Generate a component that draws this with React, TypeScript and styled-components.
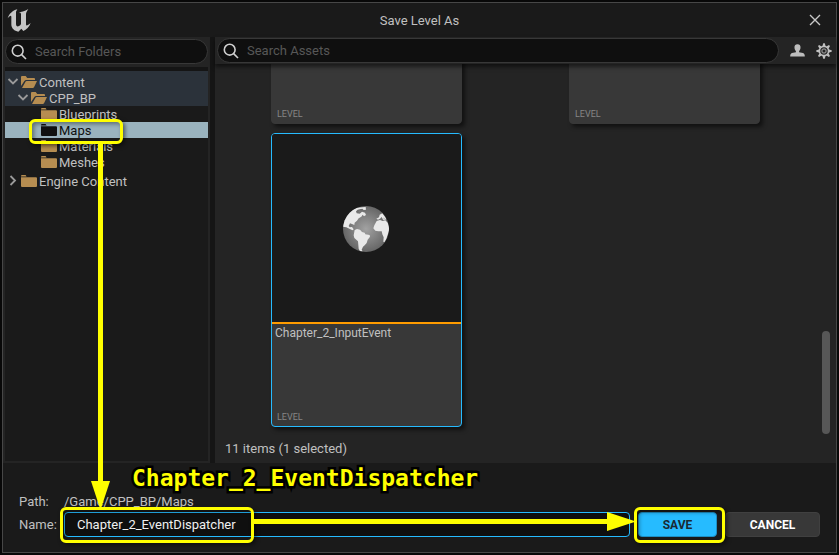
import React from "react";
import styled, { createGlobalStyle, css } from "styled-components";

const GlobalStyle = createGlobalStyle`
  *, *::before, *::after { box-sizing: border-box; }
  html, body, #root { height: 100%; }
  body {
    margin: 0;
    background: #080808;
    font-family: Roboto, "Liberation Sans", sans-serif;
    font-size: 13px;
    line-height: 16px;
    color: #c0c0c0;
  }
  button, input { font: inherit; color: inherit; }
`;

const yellow = "#ffff00";

const Desktop = styled.div`
  height: 100%;
  padding: 2px;
`;

const Dialog = styled.main`
  position: relative;
  display: flex;
  flex-direction: column;
  height: 100%;
  border: 1px solid #474747;
  background: #1a1a1a;
`;

const TitleBar = styled.header`
  display: grid;
  grid-template-columns: 1fr auto 1fr;
  align-items: center;
  height: 34px;
  flex: none;
  padding: 0 4px;
`;

const Title = styled.h1`
  margin: 0;
  padding-top: 2px;
  font-size: 13px;
  font-weight: 400;
`;

const IconButton = styled.button`
  display: flex;
  justify-self: end;
  padding: 0;
  border: 0;
  background: none;
`;

const CloseButton = styled(IconButton)`
  padding: 0 11px;
`;

const Panels = styled.div`
  display: flex;
  flex: 1;
  min-height: 0;
  gap: 5px;
  background: #151515;
`;

const FolderPanel = styled.aside`
  display: flex;
  flex-direction: column;
  flex: none;
  width: 207px;
  background: #242424;
  padding: 0 2px 2px;
`;

const FolderSearchBar = styled.div`
  padding: 2px 0 3px;
`;

const SearchBox = styled.label`
  display: flex;
  align-items: center;
  gap: 8px;
  flex: 1;
  height: 25px;
  padding: 0 5px;
  border: 1px solid #383838;
  border-radius: 13px;
  background: #0f0f0f;
`;

const SearchInput = styled.input`
  flex: 1;
  min-width: 0;
  padding: 0;
  border: 0;
  outline: 0;
  background: none;
  &::placeholder { color: #575757; opacity: 1; }
`;

const Tree = styled.ul`
  flex: 1;
  margin: 0;
  padding: 0;
  list-style: none;
  border-top: 4px solid #151515;
  background: #1a1a1a;
`;

const TreeRow = styled.li<{ $depth: number; $state?: "ancestor" | "selected" }>`
  position: relative;
  display: flex;
  align-items: center;
  gap: 2px;
  height: ${(p) => (p.$depth === 0 ? 19 : 16)}px;
  padding-top: ${(p) => (p.$depth === 0 ? 3 : 0)}px;
  padding-left: ${(p) => 2 + p.$depth * 10}px;
  white-space: nowrap;
  ${(p) => p.$state === "ancestor" && css`background: #2b323a;`}
  ${(p) => p.$state === "selected" && css`background: #9ab3be; color: #101010;`}
`;

const TreeLabel = styled.span`
  padding-top: 2px;
`;

const Twisty = styled.span`
  display: flex;
  width: 12px;
`;

const AssetPanel = styled.section`
  display: flex;
  flex-direction: column;
  flex: 1;
  min-width: 0;
  background: #242424;
`;

const AssetToolbar = styled.div`
  position: relative;
  display: flex;
  align-items: center;
  gap: 11px;
  flex: none;
  height: 27px;
  padding: 0 4px 0 2px;
  background: #242424;
  box-shadow: 0 3px 4px #0008;
`;

const AssetView = styled.div`
  display: flex;
  flex: 1;
  min-height: 0;
`;

const AssetGrid = styled.div`
  display: grid;
  flex: 1;
  grid-template-columns: repeat(auto-fill, 191px);
  align-content: end;
  gap: 9px 107px;
  padding: 0 0 10px 56px;
  overflow: hidden;
`;

const Card = styled.article<{ $selected?: boolean }>`
  display: flex;
  flex-direction: column;
  height: 294px;
  overflow: hidden;
  border: 1px solid ${(p) => (p.$selected ? "#26bbff" : "#383838")};
  border-radius: 4px;
  background: #383838;
  box-shadow: 3px 3px 4px #0008;
`;

const Thumbnail = styled.div`
  display: grid;
  place-items: center;
  height: 190px;
  flex: none;
  padding: 2px 1px 0 0;
  border-bottom: 2px solid #ff9c00;
  background: #1a1a1a;
`;

const AssetName = styled.div`
  flex: 1;
  padding: 1px 3px 0;
  font-size: 12px;
`;

const AssetType = styled.div`
  padding: 0 5px 1px;
  font-size: 9px;
  line-height: 15px;
  color: #868686;
`;

const ScrollRail = styled.div`
  display: flex;
  align-items: flex-end;
  width: 14px;
  padding-bottom: 3px;
`;

const ScrollThumb = styled.div`
  width: 8px;
  height: 103px;
  border-radius: 4px;
  background: #575757;
`;

const StatusLine = styled.div`
  padding: 4px 10px 6px;
`;

const Footer = styled.form`
  display: grid;
  grid-template-columns: 45px minmax(0, 1fr);
  align-items: center;
  flex: none;
  padding: 28px 16px 15px;
`;

const PathText = styled.output`
  line-height: 21px;
`;

const NameRow = styled.div`
  display: flex;
  align-items: center;
  gap: 8px;
`;

const NameField = styled.div`
  position: relative;
  flex: 1;
  min-width: 0;
`;

const NameInput = styled.input`
  display: block;
  width: 100%;
  height: 25px;
  padding: 0 12px;
  border: 1px solid #26bbff;
  border-radius: 4px;
  outline: 0;
  background: #0f0f0f;
  color: #f0f0f0;
`;

const Buttons = styled.div`
  display: flex;
  gap: 8px;
`;

const ButtonSlot = styled.div<{ $width: number }>`
  position: relative;
  width: ${(p) => p.$width}px;
`;

const ActionButton = styled.button<{ $primary?: boolean }>`
  width: 100%;
  height: 25px;
  padding: 0;
  border: 1px solid ${(p) => (p.$primary ? "#1e8fc4" : "#404040")};
  border-radius: 4px;
  background: ${(p) => (p.$primary ? "#26bbff" : "#383838")};
  color: ${(p) => (p.$primary ? "#1a2a33" : "#ffffff")};
  font-size: 12px;
  font-weight: 700;
`;

const Highlight = styled.span<{ $inset: string; $width?: number }>`
  position: absolute;
  z-index: 2;
  inset: ${(p) => p.$inset};
  ${(p) => p.$width && css`width: ${p.$width}px;`}
  border: 3px solid ${yellow};
  border-radius: 6px;
  box-shadow: 2px 2px 4px #0008, inset 2px 2px 4px #0006;
  pointer-events: none;
`;

const DownArrow = styled.span`
  position: absolute;
  z-index: 3;
  left: 88px;
  top: 139px;
  bottom: 42px;
  width: 19px;
  display: flex;
  flex-direction: column;
  align-items: center;
  pointer-events: none;
  &::before { content: ""; flex: 1; width: 5px; background: ${yellow}; }
`;

const RightArrow = styled.span`
  position: absolute;
  z-index: 3;
  left: 189px;
  right: -6px;
  top: 0;
  height: 19px;
  display: flex;
  align-items: center;
  pointer-events: none;
  &::before { content: ""; flex: 1; height: 5px; background: ${yellow}; }
`;

const Callout = styled.span`
  position: absolute;
  z-index: 3;
  left: 129px;
  bottom: 58px;
  font-family: "DejaVu Sans Mono", monospace;
  font-size: 23px;
  line-height: 32px;
  font-weight: 700;
  color: ${yellow};
  -webkit-text-stroke: 5px #000;
  paint-order: stroke fill;
  pointer-events: none;
`;

const Logo = () => (
  <svg width="24" height="24" viewBox="0 0 72 72" fill="#c6c6c6" aria-label="Unreal">
    <path d="M2 31C6 18 16 8 31 4L27 11V48C27 54 31 57 36 54C39 53 41 51 42 48V19C42 15 40 14 35 16C40 10 54 11 64 3C60 9 57 14 57 19V49C57 55 62 53 71 45C67 57 58 65 49 69L43 62L34 71C22 69 14 61 13 51V27C13 21 8 23 2 31Z" />
  </svg>
);

const SearchIcon = () => (
  <svg width="16" height="16" viewBox="0 0 16 16" fill="none" stroke="#d0d0d0" strokeWidth="1.6" aria-hidden>
    <circle cx="6.7" cy="6.7" r="5.4" />
    <path d="M10.6 10.6L15 15" />
  </svg>
);

const CloseIcon = () => (
  <svg width="12" height="12" viewBox="0 0 12 12" stroke="#c8c8c8" strokeWidth="1.4" aria-hidden>
    <path d="M1 1L11 11M11 1L1 11" />
  </svg>
);

const UserIcon = () => (
  <svg width="15" height="13" viewBox="0 0 15 13" fill="#bdbdbd" aria-hidden>
    <path d="M7.5 0.3C9.8 0.3 10.8 2 10.5 4.1C10.3 5.5 9.8 6.4 9.1 7.1V8.2L13 9C14.3 9.4 14.8 10.5 14.8 12.4H0.2C0.2 10.5 0.7 9.4 2 9L5.9 8.2V7.1C5.2 6.4 4.7 5.5 4.5 4.1C4.2 2 5.2 0.3 7.5 0.3Z" />
  </svg>
);

const GearIcon = () => (
  <svg width="16" height="16" viewBox="-8 -8 16 16" fill="none" stroke="#c0c0c0" aria-hidden>
    <circle r="4.6" strokeWidth="1.7" />
    <circle r="2.1" strokeWidth="1.3" stroke="#8a8a8a" />
    {[0, 45, 90, 135, 180, 225, 270, 315].map((a) => (
      <path key={a} transform={`rotate(${a})`} d="M-1.5 -5L-0.8 -7.7H0.8L1.5 -5Z" fill="#c0c0c0" stroke="none" />
    ))}
  </svg>
);

const Chevron = ({ open }: { open: boolean }) => (
  <svg width="12" height="12" viewBox="0 0 12 12" fill="none" stroke="#9a9a9a" strokeWidth="1.8" aria-hidden>
    <path d={open ? "M1.5 3L6 7.5L10.5 3" : "M3.5 1L8 5.5L3.5 10"} />
  </svg>
);

const FolderIcon = ({ kind }: { kind: "open" | "closed" | "dark" }) =>
  kind === "open" ? (
    <svg width="16" height="12" viewBox="0 0 16 12" fill="#b68d51" aria-hidden>
      <path d="M0 10V1Q0 0 1 0H4.7L6.2 2H13Q14 2 14 3V4H5.2Q4 4 3.4 5Z" />
      <path d="M1 12L4.5 5.7Q4.8 5 5.8 5H16L13 11.2Q12.6 12 11.8 12Z" />
    </svg>
  ) : (
    <svg width="16" height="12" viewBox="0 0 16 12" fill={kind === "dark" ? "#111" : "#b68d51"} aria-hidden>
      <path d="M0 1.5V1Q0 0 1 0H4.6L5.6 1.5ZM0 2.2H15Q16 2.2 16 3.2V11Q16 12 15 12H1Q0 12 0 11Z" />
    </svg>
  );

const Globe = () => (
  <svg width="46" height="46" viewBox="0 0 138 138" aria-hidden>
    <defs>
      <radialGradient id="sea" cx="0.5" cy="0.5" r="0.5">
        <stop offset="0" stopColor="#a2a2a2" />
        <stop offset="1" stopColor="#666" />
      </radialGradient>
      <clipPath id="disc"><circle cx="69" cy="69" r="69" /></clipPath>
    </defs>
    <circle cx="69" cy="69" r="69" fill="url(#sea)" />
    <g clipPath="url(#disc)" fill="#e9e9e9">
      <path d="M0 62L2 40L18 18L40 5L68 3L69 11L62 12L58 8L50 10L44 11L39 16L41 22L50 23L57 17L66 20L69 27L63 31L59 26L55 32L47 37L42 44L35 50L34 57L29 55L21 52L17 60L20 64L27 63L32 70L29 73L19 68L10 64Z" />
      <path d="M35 72L42 69L51 71L57 78L65 80L67 85L80 87L81 92L74 101L71 111L65 118L60 122L56 131L59 136L51 136L47 128L45 106L34 96L32 88Z" />
      <path d="M100 38L108 34L110 26L118 22L129 37L127 43L120 41L116 33L111 38L105 41Z" />
      <path d="M94 58L101 45L111 42L119 45L127 43L134 50L140 68L130 99L124 109L121 107L122 94L118 85L116 76L106 76L97 74L91 67Z" />
    </g>
    <path d="M121 36L126 40M47 16L53 15" stroke="#888" strokeWidth="2" />
  </svg>
);

type Folder = {
  name: string;
  depth: number;
  open?: boolean;
  leaf?: boolean;
  state?: "ancestor" | "selected";
};

const folders: Folder[] = [
  { name: "Content", depth: 0, open: true, state: "ancestor" },
  { name: "CPP_BP", depth: 1, open: true, state: "ancestor" },
  { name: "Blueprints", depth: 2, leaf: true },
  { name: "Maps", depth: 2, leaf: true, state: "selected" },
  { name: "Materials", depth: 2, leaf: true },
  { name: "Meshes", depth: 2, leaf: true },
  { name: "Engine Content", depth: 0 },
];

const assets = [
  { id: 1, name: "", selected: false },
  { id: 2, name: "", selected: false },
  { id: 3, name: "Chapter_2_InputEvent", selected: true },
];

export default function App() {
  return (
    <>
      <GlobalStyle />
      <Desktop>
        <Dialog>
          <TitleBar>
            <Logo />
            <Title>Save Level As</Title>
            <CloseButton type="button" aria-label="Close"><CloseIcon /></CloseButton>
          </TitleBar>

          <Panels>
            <FolderPanel>
              <FolderSearchBar>
                <SearchBox>
                  <SearchIcon />
                  <SearchInput aria-label="Search Folders" placeholder="Search Folders" />
                </SearchBox>
              </FolderSearchBar>
              <Tree>
                {folders.map((f) => (
                  <TreeRow key={f.name} $depth={f.depth} $state={f.state}>
                    <Twisty>{!f.leaf && <Chevron open={!!f.open} />}</Twisty>
                    <FolderIcon kind={f.state === "selected" ? "dark" : f.open ? "open" : "closed"} />
                    <TreeLabel>{f.name}</TreeLabel>
                    {f.state === "selected" && <Highlight $inset="-3px auto -6px 24px" $width={94} />}
                  </TreeRow>
                ))}
              </Tree>
            </FolderPanel>

            <AssetPanel>
              <AssetToolbar>
                <SearchBox>
                  <SearchIcon />
                  <SearchInput aria-label="Search Assets" placeholder="Search Assets" />
                </SearchBox>
                <IconButton type="button" aria-label="Filter by developer"><UserIcon /></IconButton>
                <IconButton type="button" aria-label="Settings"><GearIcon /></IconButton>
              </AssetToolbar>
              <AssetView>
                <AssetGrid>
                  {assets.map((a) => (
                    <Card key={a.id} $selected={a.selected}>
                      <Thumbnail><Globe /></Thumbnail>
                      <AssetName>{a.name}</AssetName>
                      <AssetType>LEVEL</AssetType>
                    </Card>
                  ))}
                </AssetGrid>
                <ScrollRail><ScrollThumb /></ScrollRail>
              </AssetView>
              <StatusLine>11 items (1 selected)</StatusLine>
            </AssetPanel>
          </Panels>

          <Footer onSubmit={(e) => e.preventDefault()}>
            <label htmlFor="path">Path:</label>
            <PathText id="path">/Game/CPP_BP/Maps</PathText>
            <label htmlFor="name">Name:</label>
            <NameRow>
              <NameField>
                <NameInput id="name" defaultValue="Chapter_2_EventDispatcher" />
                <Highlight $inset="-5px auto -6px -4px" $width={194} />
                <RightArrow>
                  <svg width="29" height="19" viewBox="0 0 29 19" fill={yellow}><path d="M0 0L29 9.5L0 19Z" /></svg>
                </RightArrow>
              </NameField>
              <Buttons>
                <ButtonSlot $width={79}>
                  <ActionButton type="submit" $primary>SAVE</ActionButton>
                  <Highlight $inset="-5px -8px -6px -4px" />
                </ButtonSlot>
                <ButtonSlot $width={95}>
                  <ActionButton type="button">CANCEL</ActionButton>
                </ButtonSlot>
              </Buttons>
            </NameRow>
          </Footer>

          <DownArrow>
            <svg width="19" height="29" viewBox="0 0 19 29" fill={yellow}><path d="M0 0H19L9.5 29Z" /></svg>
          </DownArrow>
          <Callout>Chapter_2_EventDispatcher</Callout>
        </Dialog>
      </Desktop>
    </>
  );
}
